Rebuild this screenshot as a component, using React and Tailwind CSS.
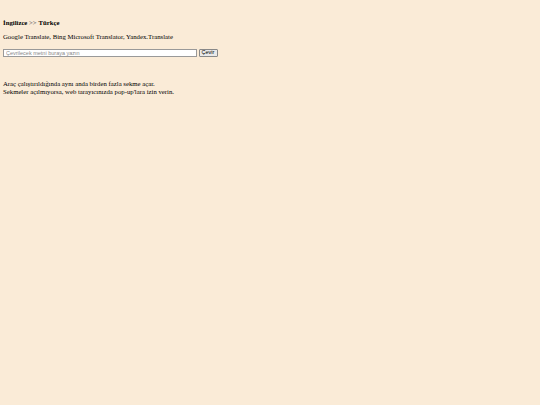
export default function App() {
  return (
    <div className="min-h-[405px] w-full bg-[#faebd7] px-[3px] pt-[18.5px] text-black font-['Liberation_Serif',serif] text-[6.75px] leading-[7.5px]">
      <div>
        <b>İngilizce</b> <span className="text-[#555]">&gt;&gt;</span> <b>Türkçe</b>
      </div>
      <div className="mt-[7px]">Google Translate, Bing Microsoft Translator, Yandex.Translate</div>
      <div className="mt-[8px] flex items-center gap-[1.5px]">
        <input
          type="text"
          placeholder="Çevrilecek metni buraya yazın"
          className="h-[8px] w-[194px] border border-[#999] bg-white px-[2px] font-['Liberation_Sans',sans-serif] text-[5.5px] placeholder:text-[#888] outline-none"
        />
        <button className="h-[8px] w-[19px] rounded-[1px] border border-[#888] bg-[#e9e9e9] font-['Liberation_Sans',sans-serif] text-[5.5px] leading-none">
          Çevir
        </button>
      </div>
      <div className="mt-[23.5px]">
        <div>Araç çalıştırıldığında aynı anda birden fazla sekme açar.</div>
        <div>Sekmeler açılmıyorsa, web tarayıcınızda pop-up'lara izin verin.</div>
      </div>
    </div>
  );
}
